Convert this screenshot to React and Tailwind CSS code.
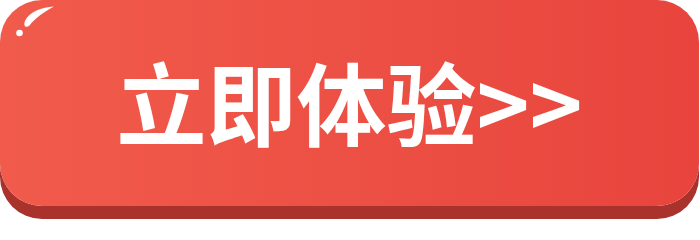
export default function App() {
  return (
    <div className="w-[700px] h-[219px] bg-white">
      {/* BOTÓN */}
      <button className="relative flex w-[699px] h-[206px] items-center justify-center rounded-[42px] bg-gradient-to-r from-[#f15b4b] to-[#e8443d] shadow-[0_13px_0_#a9322c]">
        {/* brillo */}
        <svg className="absolute left-0 top-0" width="70" height="45" viewBox="0 0 70 45">
          <path d="M54 6.5 C42 7 29 12 25 21 C23 26 26 28.5 29.5 25.5 C35 18 44 12 54 6.5 Z" fill="#fff" />
          <circle cx="19.5" cy="33" r="3.3" fill="#fff" />
        </svg>
        <span className="-mt-[6px] text-white font-bold text-[90px] leading-none [font-family:'Noto_Sans_CJK_SC',sans-serif]">
          立即体验&gt;&gt;
        </span>
      </button>
    </div>
  );
}
